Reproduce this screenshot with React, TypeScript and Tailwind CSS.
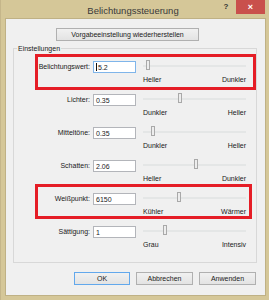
import React from "react";

type Row = {
  label: string;
  value: string;
  min: string;
  max: string;
  thumb: number;
  focus?: boolean;
  mark?: { top: number; width: number; height: number };
};

const ROWS: Row[] = [
  { label: "Belichtungswert:", value: "5.2", min: "Heller", max: "Dunkler", thumb: 3, focus: true, mark: { top: -7, width: 221, height: 36 } },
  { label: "Lichter:", value: "0.35", min: "Dunkler", max: "Heller", thumb: 35 },
  { label: "Mitteltöne:", value: "0.35", min: "Dunkler", max: "Heller", thumb: 8 },
  { label: "Schatten:", value: "2.06", min: "Heller", max: "Dunkler", thumb: 51 },
  { label: "Weißpunkt:", value: "6150", min: "Kühler", max: "Wärmer", thumb: 34, mark: { top: -9, width: 217, height: 35 } },
  { label: "Sättigung:", value: "1", min: "Grau", max: "Intensiv", thumb: 20 },
];

const font = { fontFamily: '"Liberation Sans", Arial, sans-serif' };

function WinButton({ children, primary }: { children: React.ReactNode; primary?: boolean }) {
  return (
    <div
      className={
        "flex h-[13px] items-center justify-center border bg-gradient-to-b from-[#f1f1f1] to-[#e3e3e3] text-[7px] leading-[9px] text-[#1a1a1a] " +
        (primary ? "border-[#62a8ec]" : "border-[#b0b0b0]")
      }
    >
      {children}
    </div>
  );
}

function SettingRow({ row }: { row: Row }) {
  return (
    <div className="relative flex h-[33px] items-start">
      <div className="mr-[3px] w-[76px] text-right text-[7px] leading-[12px] text-[#1a1a1a]">{row.label}</div>
      <div
        className={
          "mr-[7px] flex h-[12px] w-[43px] items-center border bg-white pl-[2px] text-[7px] text-[#1a1a1a] " +
          (row.focus ? "border-[#7fb5ea]" : "border-[#b3b5ba]")
        }
      >
        {row.focus && <span className="mr-[1px] h-[8px] w-px bg-[#111]" />}
        <span className="leading-[9px]">{row.value}</span>
      </div>
      <div className="w-[103px]">
        <div className="relative h-[12px]">
          <div className="absolute left-0 right-0 top-[4px] h-[2px] bg-[#e4e6e6]" />
          <div
            className="absolute top-[-1px] h-[10px] w-[4px] border border-[#a9a9a9] bg-[#ededed]"
            style={{ left: row.thumb }}
          />
        </div>
        <div className="mt-[2px] flex justify-between text-[7px] leading-[9px] text-[#1a1a1a]">
          <span>{row.min}</span>
          <span>{row.max}</span>
        </div>
      </div>
      {row.mark && (
        <div
          className="pointer-events-none absolute left-[21px] border-[3px] border-[#e51d26]"
          style={{ top: row.mark.top, width: row.mark.width, height: row.mark.height }}
        />
      )}
    </div>
  );
}

export default function App() {
  return (
    <div className="flex h-[300px] w-[269px] flex-col border-l border-[#c5b68a] bg-[#d5c798]" style={font}>
      {/* title bar */}
      <div className="flex h-[18px] items-start">
        <div className="flex-1 pl-[49px] pt-[2px] text-center text-[9.5px] leading-[17px] text-[#3a3a3a]">
          Belichtungssteuerung
        </div>
        <div className="w-[20px] pt-[2px] text-center text-[8px] font-bold leading-[9px] text-[#333]">?</div>
        <div className="mr-[4px] flex h-[14px] w-[29px] items-center justify-center bg-[#c9504c] text-[9px] font-bold leading-[9px] text-white">
          ×
        </div>
      </div>

      {/* client area */}
      <div className="ml-[4px] mr-[3px] flex h-[278px] flex-col border border-[#bfb185] bg-[#f0f0f0]">
        <div className="ml-[50px] mt-[9px] w-[143px]">
          <WinButton>Vorgabeeinstellung wiederherstellen</WinButton>
        </div>

        <fieldset className="ml-[7px] mt-[3px] w-[244px] border border-[#d8d8d8] pb-[3px]">
          <legend className="ml-[3px] px-[1px] text-[7px] leading-[9px] text-[#1a1a1a]">Einstellungen</legend>
          <div className="mt-[8px] flex flex-col">
            {ROWS.map((r) => (
              <SettingRow key={r.label} row={r} />
            ))}
          </div>
        </fieldset>

        <div className="mr-[9px] mt-[9px] flex justify-end gap-[6px]">
          <div className="w-[56px]">
            <WinButton primary>OK</WinButton>
          </div>
          <div className="w-[57px]">
            <WinButton>Abbrechen</WinButton>
          </div>
          <div className="w-[57px]">
            <WinButton>Anwenden</WinButton>
          </div>
        </div>
      </div>
    </div>
  );
}
